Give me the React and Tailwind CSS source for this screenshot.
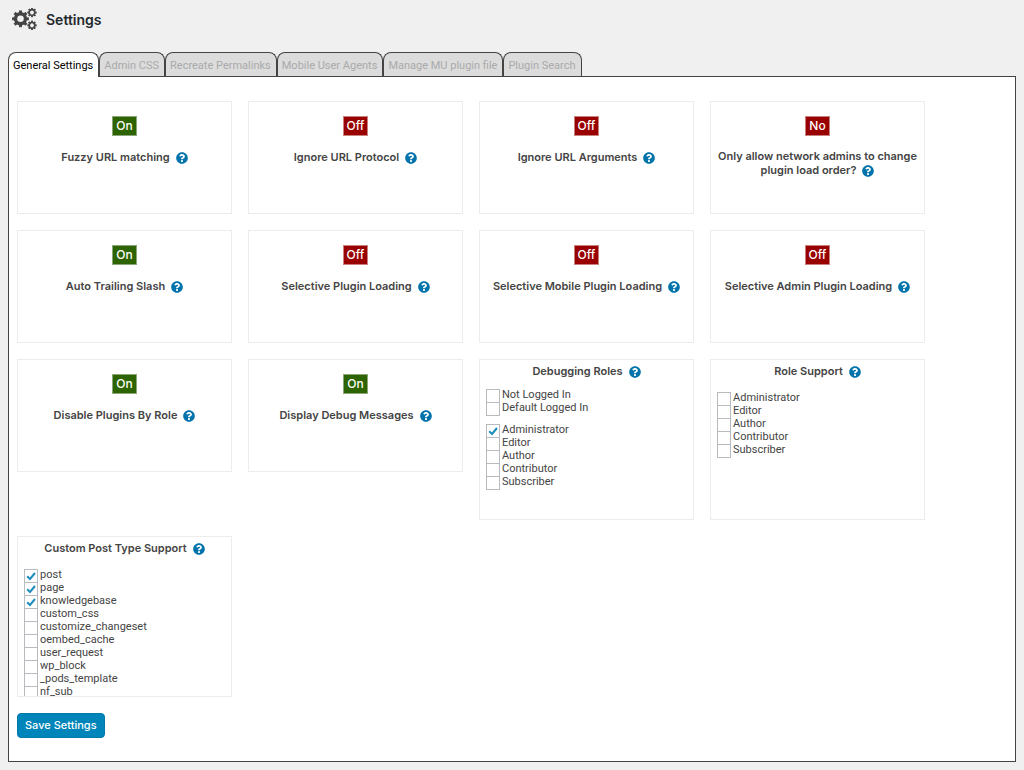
import React, { useState } from 'react';
import { FaQuestionCircle } from 'react-icons/fa';

const TABS = [
    'General Settings',
    'Admin CSS',
    'Recreate Permalinks',
    'Mobile User Agents',
    'Manage MU plugin file',
    'Plugin Search',
];

const TOGGLES = [
    { id: 'fuzzy', label: 'Fuzzy URL matching', value: true },
    { id: 'protocol', label: 'Ignore URL Protocol', value: false },
    { id: 'arguments', label: 'Ignore URL Arguments', value: false },
    { id: 'network', label: 'Only allow network admins to change plugin load order?', value: false, on: 'Yes', off: 'No' },
    { id: 'slash', label: 'Auto Trailing Slash', value: true },
    { id: 'selective', label: 'Selective Plugin Loading', value: false },
    { id: 'mobile', label: 'Selective Mobile Plugin Loading', value: false },
    { id: 'admin', label: 'Selective Admin Plugin Loading', value: false },
    { id: 'by-role', label: 'Disable Plugins By Role', value: true },
    { id: 'debug', label: 'Display Debug Messages', value: true },
];

const ROLES = ['Administrator', 'Editor', 'Author', 'Contributor', 'Subscriber'];

const POST_TYPES = [
    'post',
    'page',
    'knowledgebase',
    'custom_css',
    'customize_changeset',
    'oembed_cache',
    'user_request',
    'wp_block',
    '_pods_template',
    'nf_sub',
];

const Gear = ({ cx, cy, r, width, tooth }) => (
    <g transform={`translate(${cx} ${cy})`}>
        <circle r={r} fill="none" stroke="currentColor" strokeWidth={width} />
        {[0, 45, 90, 135, 180, 225, 270, 315].map((angle) => (
            <rect
                key={angle}
                x={-tooth / 2}
                y={-(r + width / 2 + tooth * 0.55)}
                width={tooth}
                height={tooth}
                fill="currentColor"
                transform={`rotate(${angle})`}
            />
        ))}
    </g>
);

const GearsIcon = () => (
    <svg viewBox="0 0 26 24" className="h-6 w-[26px] text-[#444]" aria-hidden="true">
        <Gear cx={8.5} cy={10.8} r={5} width={3.4} tooth={3} />
        <Gear cx={20} cy={4.5} r={2.8} width={1.7} tooth={1.9} />
        <Gear cx={20} cy={17.3} r={2.8} width={1.7} tooth={1.9} />
    </svg>
);

const HelpLink = ({ topic }) => (
    <a href="#help" aria-label={`Help: ${topic}`} className="ml-1.5 inline-block pt-0.5 align-[-3px] text-[#0073aa]">
        <FaQuestionCircle className="size-3" />
    </a>
);

const ToggleCard = ({ label, value, on = 'On', off = 'Off' }) => {
    const [enabled, setEnabled] = useState(value);

    return (
        <div className="h-[113px] w-[215px] border border-[#ececec] px-1.5 pt-3.5 text-center">
            <button
                type="button"
                aria-pressed={enabled}
                onClick={() => setEnabled(!enabled)}
                className={
                    enabled
                        ? 'h-5 border border-[#8aa67a] bg-[#2d6400] px-[3px] text-xs leading-[18px] font-medium text-white'
                        : 'h-5 border border-[#c98080] bg-[#990000] px-[3px] text-xs leading-[18px] font-medium text-white'
                }
            >
                {enabled ? on : off}
            </button>
            <h2 className="mt-3.5 font-semibold">
                {label}
                <HelpLink topic={label} />
            </h2>
        </div>
    );
};

const CheckItem = ({ name, label, checked }) => (
    <label className="flex h-[13px] items-center gap-0.5 font-['Roboto',sans-serif]">
        <span className="relative mt-0.5 block h-3.5 w-3.5 shrink-0">
            <input
                type="checkbox"
                name={name}
                defaultChecked={checked}
                className="peer block size-3.5 appearance-none border border-[#b8bcc0] bg-white"
            />
            <svg
                viewBox="0 0 14 14"
                className="pointer-events-none absolute inset-0 hidden size-3.5 text-[#1e8cbe] peer-checked:block"
                aria-hidden="true"
            >
                <path d="M3.2 7.2 6 10 11 4" fill="none" stroke="currentColor" strokeWidth="2" />
            </svg>
        </span>
        {label}
    </label>
);

const ListCard = ({ title, children }) => (
    <fieldset className="h-[161px] w-[215px] overflow-y-auto border border-[#ececec] px-1.5 pt-1 [scrollbar-width:none]">
        <h2 className="text-center font-semibold">
            {title}
            <HelpLink topic={title} />
        </h2>
        {children}
    </fieldset>
);

const App = () => {
    const [activeTab, setActiveTab] = useState('General Settings');

    return (
        <div className="min-h-screen bg-[#f0f0f0] px-2 pb-2 font-['Inter',sans-serif] text-[11px] leading-[13px] text-[#444]">
            <header className="flex h-[52px] items-start gap-2 pt-2 pl-1">
                <GearsIcon />
                <h1 className="text-sm leading-6 font-semibold text-[#23282d]">Settings</h1>
            </header>

            <nav className="relative flex font-['Roboto',sans-serif]" role="tablist">
                {TABS.map((tab) => (
                    <button
                        key={tab}
                        type="button"
                        role="tab"
                        aria-selected={tab === activeTab}
                        onClick={() => setActiveTab(tab)}
                        className={
                            tab === activeTab
                                ? '-mb-px h-[25px] rounded-t-lg border border-b-0 border-[#444] bg-white pr-[5px] pl-1 text-black'
                                : 'h-6 rounded-t-lg border border-b-0 border-[#444] bg-[#dcdcdc] pt-px pr-[5px] pl-1 text-[#aaa]'
                        }
                    >
                        {tab}
                    </button>
                ))}
            </nav>

            <main className="border border-[#444] bg-white px-2 pt-6 pb-[23px]">
                <form onSubmit={(e) => e.preventDefault()}>
                    <div className="flex flex-wrap items-start gap-4">
                        {TOGGLES.map((item) => (
                            <ToggleCard key={item.id} {...item} />
                        ))}

                        <ListCard title="Debugging Roles">
                            <div className="mt-2.5">
                                <CheckItem name="debug_roles" label="Not Logged In" />
                                <CheckItem name="debug_roles" label="Default Logged In" />
                            </div>
                            <div className="mt-[9px]">
                                {ROLES.map((role) => (
                                    <CheckItem key={role} name="debug_roles" label={role} checked={role === 'Administrator'} />
                                ))}
                            </div>
                        </ListCard>

                        <ListCard title="Role Support">
                            <div className="mt-[13px]">
                                {ROLES.map((role) => (
                                    <CheckItem key={role} name="role_support" label={role} />
                                ))}
                            </div>
                        </ListCard>

                        <ListCard title="Custom Post Type Support">
                            <div className="mt-[13px]">
                                {POST_TYPES.map((type, index) => (
                                    <CheckItem key={type} name="post_types" label={type} checked={index < 3} />
                                ))}
                            </div>
                        </ListCard>
                    </div>

                    <button
                        type="submit"
                        className="mt-4 h-[25px] rounded-sm border border-[#0079ab] bg-[#0085ba] px-[7px] font-medium text-white"
                    >
                        Save Settings
                    </button>
                </form>
            </main>
        </div>
    );
};

export default App;
